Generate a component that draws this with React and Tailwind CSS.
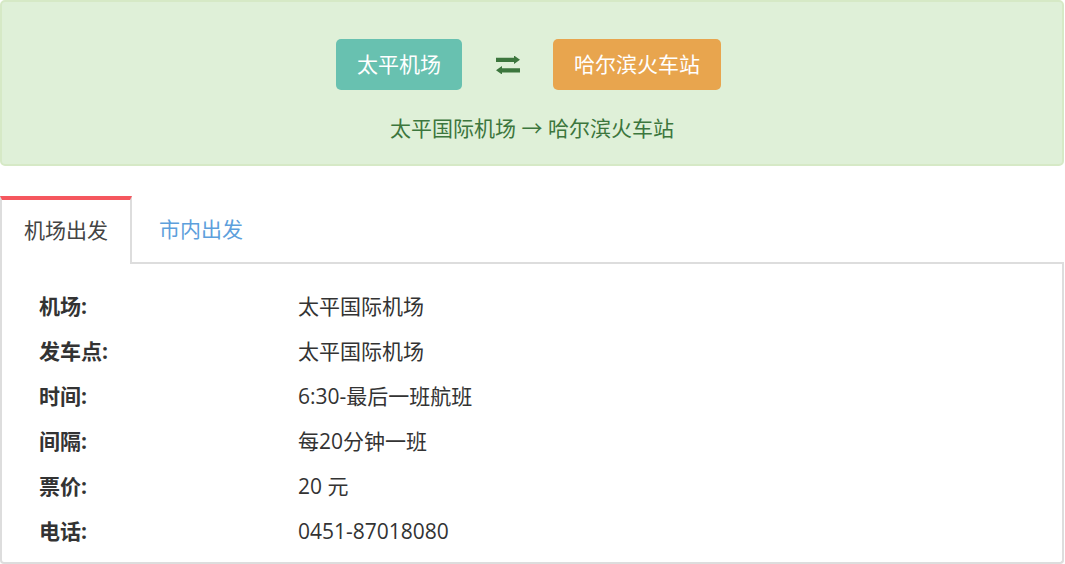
import React from "react";

const font = { fontFamily: '"Open Sans", "Noto Sans CJK SC", sans-serif' };

function SwapIcon() {
  return (
    <svg width="26" height="18" viewBox="0 0 26 18" fill="#3c763d">
      <path d="M1 2.5 H19 V0 L25 5 L19 10 V7.5 H1 Z" transform="translate(0,-0.5) scale(1,0.85)" />
      <path d="M25 12.5 H7 V10 L1 15 L7 20 V17.5 H25 Z" transform="translate(0,1.5) scale(1,0.85)" />
    </svg>
  );
}

const rows = [
  ["机场:", "太平国际机场"],
  ["发车点:", "太平国际机场"],
  ["时间:", "6:30-最后一班航班"],
  ["间隔:", "每20分钟一班"],
  ["票价:", "20 元"],
  ["电话:", "0451-87018080"],
];

export default function App() {
  return (
    <div className="w-[1064px] bg-white text-[#333]" style={font}>
      <div className="h-[166px] bg-[#dff0d8] border-2 border-[#d6e9c6] rounded-[5px] flex flex-col items-center pt-[37px]">
        <div className="flex items-center mr-[7px]">
          <div className="h-[51px] w-[126px] rounded-[5px] bg-[#68c1b0] text-white text-[21px] flex items-center justify-center">太平机场</div>
          <div className="w-[91px] flex justify-center pt-[1px]"><SwapIcon /></div>
          <div className="h-[51px] w-[168px] rounded-[5px] bg-[#e8a54e] text-white text-[21px] flex items-center justify-center">哈尔滨火车站</div>
        </div>
        <div className="mt-[23px] text-[21px] text-[#3c763d] leading-[30px]">太平国际机场 → 哈尔滨火车站</div>
      </div>
      <div className="mt-[30px] flex h-[68px]">
        <div className="w-[132px] h-[68px] border-t-4 border-t-[#f5575e] border-x-2 border-x-[#ddd] bg-white flex items-center justify-center text-[21px] text-[#444] pb-[2px]">机场出发</div>
        <div className="flex-1 h-[68px] border-b-2 border-[#ddd] flex items-center pl-[27px] pt-[2px] text-[21px] text-[#5d9fdc]">市内出发</div>
      </div>
      <div className="h-[300px] border-x-2 border-b-2 border-[#ddd] rounded-b-[4px] pt-[20px] pl-[37px]">
        {rows.map(([k, v]) => (
          <div key={k} className="h-[45px] flex items-center text-[21px]">
            <div className="w-[259px] font-bold text-[#333]">{k}</div>
            <div className="text-[#333]">{v}</div>
          </div>
        ))}
      </div>
    </div>
  );
}
